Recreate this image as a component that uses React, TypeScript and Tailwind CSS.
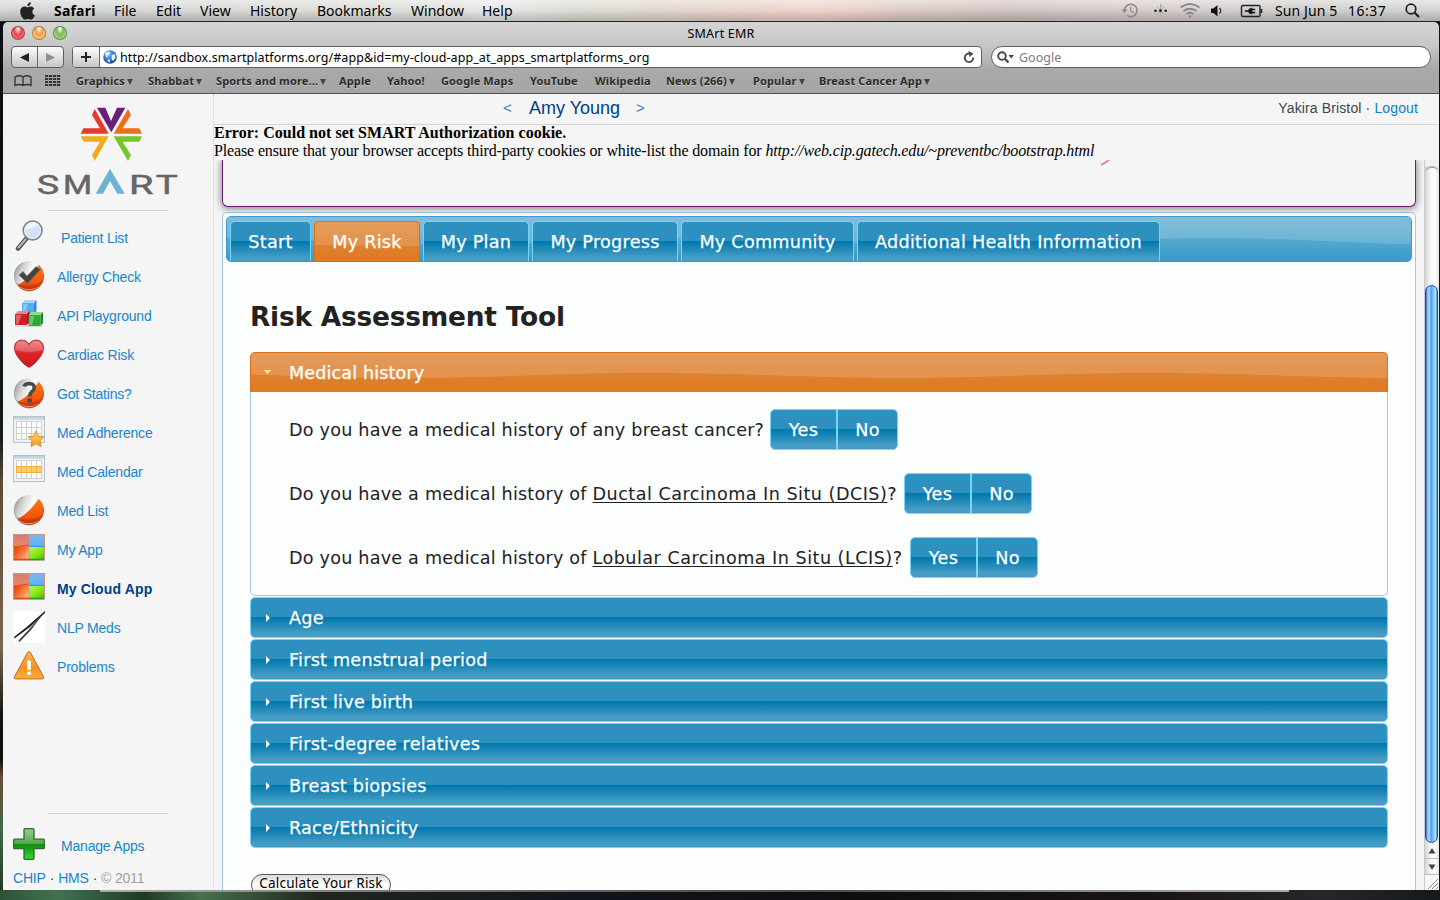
import React from "react";

const MENU: [string, string][] = [
  ["File", "w-[42px]"],
  ["Edit", "w-[44px]"],
  ["View", "w-[50px]"],
  ["History", "w-[67px]"],
  ["Bookmarks", "w-[94px]"],
  ["Window", "w-[71px]"],
  ["Help", "w-[40px]"],
];

const BOOKMARKS: [string, boolean, string][] = [
  ["Graphics", true, "w-[72px]"],
  ["Shabbat", true, "w-[68px]"],
  ["Sports and more...", true, "w-[123px]"],
  ["Apple", false, "w-[48px]"],
  ["Yahoo!", false, "w-[54px]"],
  ["Google Maps", false, "w-[89px]"],
  ["YouTube", false, "w-[65px]"],
  ["Wikipedia", false, "w-[71px]"],
  ["News (266)", true, "w-[87px]"],
  ["Popular", true, "w-[66px]"],
  ["Breast Cancer App", true, "w-[130px]"],
];

function Defs() {
  return (
    <svg className="absolute h-0 w-0" aria-hidden="true">
      <defs>
        <linearGradient id="silver" x1="0" y1=".2" x2=".75" y2=".5">
          <stop offset="0" stopColor="#8e8e8e" />
          <stop offset=".35" stopColor="#cfcfcf" />
          <stop offset=".75" stopColor="#ffffff" />
          <stop offset="1" stopColor="#d8d8d8" />
        </linearGradient>
        <linearGradient id="ember" x1="0" y1="0" x2="0" y2="1">
          <stop offset="0" stopColor="#ff7a1a" />
          <stop offset=".6" stopColor="#f4570c" />
          <stop offset="1" stopColor="#b82a08" />
        </linearGradient>
        <linearGradient id="heart" x1="0" y1="0" x2="0" y2="1">
          <stop offset="0" stopColor="#ee6c70" />
          <stop offset=".5" stopColor="#d8232a" />
          <stop offset="1" stopColor="#d0161c" />
        </linearGradient>
        <linearGradient id="redtile" x1="0" y1="0" x2="0" y2="1">
          <stop offset="0" stopColor="#c2452f" />
          <stop offset="1" stopColor="#e2542c" />
        </linearGradient>
        <linearGradient id="redlow" x1="0" y1="0" x2="1" y2=".7">
          <stop offset="0" stopColor="#e03c0a" />
          <stop offset=".5" stopColor="#f26a2c" />
          <stop offset="1" stopColor="#ffb47a" />
        </linearGradient>
        <linearGradient id="bluetile" x1="0" y1="0" x2="0" y2="1">
          <stop offset="0" stopColor="#7cb6ee" />
          <stop offset=".85" stopColor="#5fb2fb" />
          <stop offset="1" stopColor="#1a86ee" />
        </linearGradient>
        <linearGradient id="greentile" x1="0" y1="0" x2="1" y2="1">
          <stop offset="0" stopColor="#b4f65a" />
          <stop offset=".6" stopColor="#7ee60e" />
          <stop offset="1" stopColor="#4cb810" />
        </linearGradient>
        <linearGradient id="warn" x1="0" y1="0" x2="0" y2="1">
          <stop offset="0" stopColor="#f5b45a" />
          <stop offset=".6" stopColor="#f39320" />
          <stop offset="1" stopColor="#fcb040" />
        </linearGradient>
        <linearGradient id="plus" x1="0" y1="0" x2="0" y2="1">
          <stop offset="0" stopColor="#8fd08c" />
          <stop offset=".48" stopColor="#5aa856" />
          <stop offset=".52" stopColor="#118a10" />
          <stop offset="1" stopColor="#2fe02a" />
        </linearGradient>
        <linearGradient id="star" x1="0" y1="0" x2="0" y2="1">
          <stop offset="0" stopColor="#ffd977" />
          <stop offset="1" stopColor="#f59a12" />
        </linearGradient>
        <radialGradient id="globe" cx=".4" cy=".3" r=".75">
          <stop offset="0" stopColor="#7fc0f2" />
          <stop offset=".6" stopColor="#2a6fc4" />
          <stop offset="1" stopColor="#123d86" />
        </radialGradient>
        <clipPath id="ball">
          <circle cx="16" cy="16" r="14.7" />
        </clipPath>
      </defs>
    </svg>
  );
}

function Ball({ children }: { children?: React.ReactNode }) {
  return (
    <>
      <g clipPath="url(#ball)">
        <rect width="32" height="32" fill="url(#silver)" />
        <path d="M5 25 Q16 19 26.500 4 L34 6 V34 H4Z" fill="url(#ember)" />
        <path d="M1 21 Q14 31 31 20 V34 H1Z" fill="#8e1a04" opacity=".25" />
        <path d="M6 27 Q16 32.500 26 27" stroke="#ff9a7a" strokeWidth="1" fill="none" />
      </g>
      <path d="M8 28.300 A14.500 14.500 0 0 0 30.400 14" fill="none" stroke="#9c2a0c" strokeOpacity=".6" strokeWidth=".9" />
      <path d="M8 28.300 A14.500 14.500 0 0 1 10 2.800" fill="none" stroke="#777" strokeOpacity=".5" strokeWidth=".9" />
      {children}
    </>
  );
}

function Cube({ x, y, a, b, c }: { x: number; y: number; a: string; b: string; c: string }) {
  return (
    <g transform={"translate(" + x + " " + y + ")"}>
      <path d="M0 3 L3 0 H14.5 L12 3Z" fill={c} />
      <path d="M12 3 L14.5 0 V11 L12 14Z" fill={b} />
      <rect x="0" y="3" width="12" height="11" rx="1" fill={a} />
      <path d="M1 4 H6 L3.5 13 H1Z" fill="#fff" opacity=".3" />
    </g>
  );
}

function CalendarGrid() {
  return (
    <>
      <rect x="0.5" y="0.5" width="31" height="26" fill="#eef3f6" stroke="#b3c2cb" />
      <rect x="1" y="1" width="30" height="2.6" fill="#c3d2db" />
      <rect x="3" y="5" width="26" height="19" fill="#d0d0d0" />
      {[0, 1, 2].map((r) =>
        [0, 1, 2, 3, 4].map((c) => (
          <rect key={r + "-" + c} x={4 + c * 5} y={6 + r * 6} width="4" height="5" fill="#fff" />
        ))
      )}
    </>
  );
}

function Tiles() {
  return (
    <>
      <rect x="0" y="1" width="32" height="26.500" fill="#9a4a30" opacity=".55" />
      <rect x="1" y="2" width="14.500" height="12" fill="url(#redtile)" />
      <rect x="1" y="13" width="14.500" height="13" fill="url(#redlow)" />
      <path d="M1 2H15.500V11.500Q8 12 1 13.500Z" fill="#fff" opacity=".3" />
      <rect x="16.500" y="2" width="14.500" height="12" fill="url(#bluetile)" />
      <rect x="16.500" y="14" width="14.500" height="12" fill="url(#greentile)" />
      <rect x="1" y="25.700" width="15" height="1.600" fill="#d84a18" />
      <rect x="16" y="25.700" width="15" height="1.600" fill="#2d9a22" />
    </>
  );
}

const ICONS: Record<string, React.ReactNode> = {
  search: (
    <>
      <path d="M5 28.500 L13 19" stroke="#555" strokeWidth="4.600" strokeLinecap="round" />
      <path d="M5.300 27.600 L12.500 19.500" stroke="#b9b9b9" strokeWidth="2" strokeLinecap="round" />
      <circle cx="19.600" cy="10.500" r="9.300" fill="#d7e8fa" stroke="#858585" strokeWidth="1.800" />
      <circle cx="19.600" cy="10.500" r="8" fill="#cfe2f8" stroke="#eef3f8" strokeWidth="1" />
      <path d="M12 10 Q19 9 26 4.500 Q22 1.500 17 3 Q12 5 12 10Z" fill="#eef6ff" />
    </>
  ),
  check: (
    <Ball>
      <path d="M6 15 L10 11.500 L14 16 L23 6.500 L27.500 9.500 L14.500 23.500Z" fill="#444" stroke="#777" strokeWidth=".5" />
    </Ball>
  ),
  cubes: (
    <>
      <Cube x={9} y={1} a="#58a9ee" b="#3c86d2" c="#a8d5fa" />
      <Cube x={2} y={12} a="#cf2027" b="#98151b" c="#f08488" />
      <Cube x={15.5} y={13} a="#2fa834" b="#1d8124" c="#8fdd8c" />
      <rect x="2" y="26.500" width="28" height="1.500" fill="#888" opacity=".3" />
    </>
  ),
  heart: (
    <>
      <path d="M16 29.500 Q11 27 6 20.500 C-1 12 .5 3 8 2 Q13 1.500 16 6 Q19 1.500 24 2 C31.500 3 33 12 26 20.500 Q21 27 16 29.500Z" fill="url(#heart)" stroke="#a81c22" strokeWidth=".8" />
      <path d="M2.200 12 Q2 4 8.500 3.200 Q13 3 16 8 Q19 3 23.500 3.200 Q30 4 29.800 12 Q16 16 2.200 12Z" fill="#fff" opacity=".22" />
    </>
  ),
  question: (
    <Ball>
      <path d="M11 9.500 Q12 6.500 16.500 6.500 Q21.500 6.800 21.200 11 Q21 13.500 18.500 15 Q16.800 16.200 16.800 19.500" stroke="#4b4b4b" strokeWidth="3.600" fill="none" />
      <rect x="14.500" y="21.500" width="4.400" height="4" fill="#4b4b4b" />
    </Ball>
  ),
  adherence: (
    <>
      <CalendarGrid />
      <path d="M23 15 L25.400 20.100 L31 20.800 L27 24.700 L28 30.500 L23 27.700 L18 30.500 L19 24.700 L15 20.800 L20.600 20.100Z" fill="url(#star)" stroke="#d8891a" strokeWidth=".9" />
    </>
  ),
  calendar: (
    <>
      <CalendarGrid />
      <rect x="3" y="11" width="26" height="7" fill="#f5ad3a" />
      {[0, 1, 2, 3, 4].map((c) => (
        <rect key={c} x={4 + c * 5} y="12" width="4.200" height="5" fill="#ffd06a" />
      ))}
    </>
  ),
  ball: <Ball />,
  tiles: <Tiles />,
  needles: (
    <>
      <rect width="32" height="32" fill="#fff" />
      <path d="M32 0 V2 L17 16 L1.500 27.500 L1 26 L13 16.500Z" fill="#1d2126" />
      <path d="M31.500 1 L18 19 L7 30.500 L5.500 31 L6 29 L15 19.500Z" fill="#3a4148" />
    </>
  ),
  warning: (
    <>
      <path d="M16 1.800 Q17.300 1.800 18 3.500 L30.600 27 Q31.200 28.700 29.500 28.900 H2.500 Q.8 28.700 1.400 27 L14 3.500 Q14.700 1.800 16 1.800Z" fill="url(#warn)" stroke="#c46a10" strokeWidth="1" />
      <rect x="14.200" y="10.500" width="3.700" height="9.500" rx=".8" fill="#fff" />
      <rect x="14.200" y="21.500" width="3.700" height="3.600" rx="1" fill="#fff" />
    </>
  ),
  plus: (
    <path d="M12 .7 H20 Q21 .7 21 1.700 V11.200 H30.500 Q31.300 11.200 31.300 12.200 V19.700 Q31.300 20.700 30.500 20.700 H21 V30.500 Q21 31.300 20 31.300 H12 Q11 31.300 11 30.500 V20.700 H1.500 Q.7 20.700 .7 19.700 V12.200 Q.7 11.200 1.500 11.200 H11 V1.700 Q11 .7 12 .7Z" fill="url(#plus)" stroke="#2f6a2c" strokeWidth="1.300" />
  ),
};

const APPS: [string, string][] = [
  ["Allergy Check", "check"],
  ["API Playground", "cubes"],
  ["Cardiac Risk", "heart"],
  ["Got Statins?", "question"],
  ["Med Adherence", "adherence"],
  ["Med Calendar", "calendar"],
  ["Med List", "ball"],
  ["My App", "tiles"],
  ["My Cloud App", "tiles"],
  ["NLP Meds", "needles"],
  ["Problems", "warning"],
];

function AppIcon({ name, lift = "mb-[3px]" }: { name: string; lift?: string }) {
  return (
    <svg className={"h-8 w-8 shrink-0 " + lift} viewBox="0 0 32 32">
      {ICONS[name]}
    </svg>
  );
}

function MenuBar() {
  return (
    <div className="flex h-[22px] shrink-0 items-center border-b border-[#222] bg-[linear-gradient(to_right,#cdd1cf_0%,#d6d6d2_18%,#d9ddd6_30%,#e4e4e4_34%,#d8d8cf_40%,#e3cfc5_50%,#efcdc3_57%,#d8c5bd_63%,#cbbdb9_70%,#d3c8c6_80%,#c9c7c6_90%,#cfd0ce_100%)] font-['Noto_Sans','Open_Sans',sans-serif] text-[14px] text-black">
      <div className="flex h-full w-full items-center bg-gradient-to-b from-white/50 via-white/10 to-black/15">
        <svg className="ml-[20px] mr-[19px] h-[18px] w-[15px]" viewBox="0 0 15 18">
          <path d="M10.800 0 Q11 3.600 7.400 4.400 Q7.200 1 10.800 0Z M7.500 5.400 Q9 4.500 10.700 4.500 Q13 4.600 14.200 6.500 Q12.300 7.600 12.300 10 Q12.400 12.600 14.900 13.600 Q13.200 17.600 11 17.700 Q9.500 17 7.800 17 Q6.500 17 5.200 17.700 Q3.500 17.800 1.800 15 Q0 12 .2 9 Q.6 5.400 4 4.600 Q6 4.500 7.500 5.400Z" fill="#222" />
        </svg>
        <span className="w-[60px] font-bold tracking-[0.200px]">Safari</span>
        {MENU.map(([t, w]) => (
          <span key={t} className={w}>{t}</span>
        ))}
        <div className="flex-1" />
        <svg className="h-[18px] w-[150px]" viewBox="1116 2 150 18">
          <g stroke="#8a8a8a" fill="none" strokeWidth="1.500">
            <path d="M1124.500 11 A6.300 6.300 0 1 1 1127 15.500" />
            <path d="M1130.700 6.500 V11 L1134 12.500" strokeWidth="1.200" />
            <path d="M1157 7 L1163.500 14 L1160.500 17 V4.500 L1163.500 7.500 L1157 14.500" strokeWidth="1" stroke="#aaa" />
          </g>
          <path d="M1121.500 9.500 H1127.500 L1124.500 13Z" fill="#8a8a8a" />
          <g fill="#222">
            <circle cx="1155.500" cy="10.700" r="1.300" />
            <circle cx="1160.500" cy="10.700" r="1.400" />
            <circle cx="1165.700" cy="10.700" r="1.300" />
          </g>
          <g stroke="#888" fill="none" strokeWidth="1.800">
            <path d="M1180.500 7.500 Q1190 .5 1199.500 7.500" />
            <path d="M1183.500 11 Q1190 6.500 1196.500 11" />
            <path d="M1186.500 14 Q1190 11.500 1193.500 14" />
          </g>
          <circle cx="1190" cy="16.500" r="1.300" fill="#888" />
          <path d="M1211 8.500 H1213.500 L1217.500 5 V16.500 L1213.500 13 H1211Z" fill="#111" />
          <path d="M1219.500 8 Q1222 10.800 1219.500 13.500" stroke="#333" strokeWidth="1.300" fill="none" />
          <path d="M1243 5.500 H1259 Q1260 5.500 1260 6.500 V15.500 Q1260 16.500 1259 16.500 H1243 Q1241.500 16.500 1241.500 15 V7 Q1241.500 5.500 1243 5.500Z" fill="none" stroke="#222" strokeWidth="1.400" />
          <rect x="1260.500" y="9" width="1.800" height="4" fill="#222" />
          <path d="M1245 10.500 H1248 Q1249 8 1252 8 V9 H1255 V10 H1252 V12 H1255 V13 H1252 V14 Q1249 14 1248 11.500 H1245Z" fill="#111" stroke="#111" strokeWidth=".5" />
        </svg>
        <span className="ml-[9px] w-[73px] whitespace-nowrap tracking-[0.100px]">Sun Jun 5</span>
        <span className="w-[57px] tracking-[0.500px]">16:37</span>
        <svg className="mr-[20px] h-[15px] w-[15px]" viewBox="0 0 15 15">
          <circle cx="6" cy="6" r="4.800" fill="none" stroke="#222" strokeWidth="1.700" />
          <path d="M9.500 9.500 L14 14" stroke="#222" strokeWidth="2.300" />
        </svg>
      </div>
    </div>
  );
}

function Chrome() {
  return (
    <div className="flex h-[72px] shrink-0 flex-col rounded-t-[5px] border-b border-[#515151] bg-[linear-gradient(to_bottom,#d6d6d6_0,#c6c6c6_24px,#a9a9a9_48px,#a5a5a5_100%)] font-['Noto_Sans','Open_Sans',sans-serif]">
      <div className="flex h-[24px] items-center">
        <div className="flex w-[120px] gap-[7px] pb-[2px] pl-[8px]">
          <span className="h-[14px] w-[14px] rounded-full border border-[#8c3a3a]/80 bg-[radial-gradient(ellipse_at_50%_15%,#fbd0d0_8%,#e2454c_45%,#f79a9a_100%)]" />
          <span className="h-[14px] w-[14px] rounded-full border border-[#a26a35]/80 bg-[radial-gradient(ellipse_at_50%_15%,#fdeed8_8%,#ee9a4a_40%,#ffe28a_90%)]" />
          <span className="h-[14px] w-[14px] rounded-full border border-[#4c7a3a]/80 bg-[radial-gradient(ellipse_at_50%_15%,#e4f6dc_8%,#7ab85c_40%,#c4ee9c_100%)]" />
        </div>
        <span className="flex-1 pr-[120px] text-center text-[12.500px] tracking-[0.200px] text-black">SMArt EMR</span>
      </div>
      <div className="flex h-[22px] w-full pl-[8px] pr-[8px]">
        <div className="flex h-[22px] w-[53px] rounded-[4px] border border-[#5f5f5f] bg-gradient-to-b from-[#fdfdfd] to-[#c6c6c6]">
          <span className="flex w-[26px] items-center justify-center border-r border-[#6a6a6a]">
            <svg className="h-[9px] w-[9px]" viewBox="0 0 9 9"><path d="M9 0V9L0 4.500Z" fill="#222" /></svg>
          </span>
          <span className="flex flex-1 items-center justify-center">
            <svg className="h-[9px] w-[9px]" viewBox="0 0 9 9"><path d="M0 0V9L9 4.500Z" fill="#909090" /></svg>
          </span>
        </div>
        <div className="ml-[8px] flex h-[22px] w-[910px] overflow-hidden rounded-[4px] border border-[#5f5f5f] bg-white">
          <span className="flex w-[27px] items-center justify-center border-r border-[#6a6a6a] bg-gradient-to-b from-[#fdfdfd] to-[#c6c6c6]">
            <svg className="h-[10px] w-[10px]" viewBox="0 0 10 10"><path d="M4 0H6V4H10V6H6V10H4V6H0V4H4Z" fill="#222" /></svg>
          </span>
          <svg className="ml-[3px] mt-[3px] h-[14px] w-[14px]" viewBox="0 0 14 14">
            <circle cx="7" cy="7" r="6.800" fill="url(#globe)" />
            <path d="M2 3 Q5 1 7 2 L6 5 L4 6 L5 8 L3 7Z M9 5 L12 4 L12.500 8 L10 11 L8.500 9Z M5 9 L7 10 L6.500 13 L4.500 11Z" fill="#e2f0fa" />
          </svg>
          <span className="ml-[3px] flex-1 whitespace-nowrap text-[12.500px] leading-[21px] tracking-[0.085px] text-black">http://sandbox.smartplatforms.org/#app&amp;id=my-cloud-app_at_apps_smartplatforms_org</span>
          <svg className="mr-[6px] mt-[4px] h-[12px] w-[12px]" viewBox="0 0 12 12">
            <path d="M10.300 6.500 A4.300 4.300 0 1 1 6 2.500" fill="none" stroke="#444" strokeWidth="1.800" />
            <path d="M5.500 0 L10.500 2.800 L6.500 6Z" fill="#444" />
          </svg>
        </div>
        <div className="ml-[9px] flex h-[22px] flex-1 items-center rounded-full border border-[#5f5f5f] bg-white pl-[5px]">
          <svg className="h-[12px] w-[18px]" viewBox="0 0 18 12">
            <circle cx="5" cy="5" r="3.800" fill="none" stroke="#444" strokeWidth="1.900" />
            <path d="M7.800 7.800 L11.500 11.500" stroke="#444" strokeWidth="2.200" />
            <path d="M11.500 4 H17 L14.200 7.500Z" fill="#444" />
          </svg>
          <span className="ml-[4px] pt-[2px] text-[12.500px] leading-[20px] text-[#7b7b7b]">Google</span>
        </div>
      </div>
      <div className="flex h-[25px] items-center pt-[2px] text-[11px] font-bold text-[#2c2c2c] [text-shadow:0_1px_0_#c4c4c4]">
        <svg className="mb-[2px] ml-[11px] h-[12px] w-[18px]" viewBox="0 0 18 12">
          <path d="M1 10.500 V2 Q5 -.5 9 2 Q13 -.5 17 2 V10.500 Q13 8.500 9 10.500 Q5 8.500 1 10.500Z M9 2 V10.500" fill="none" stroke="#333" strokeWidth="1.300" />
        </svg>
        <svg className="mb-[2px] ml-[13px] mr-[15px] h-[12px] w-[16px]" viewBox="0 0 16 12">
          {[0, 1, 2, 3].map((r) =>
            [0, 1, 2, 3].map((c) => <rect key={r + "-" + c} x={c * 4} y={r * 3} width="3.200" height="2" fill="#333" />)
          )}
        </svg>
        {BOOKMARKS.map(([t, arrow, w]) => (
          <span key={t} className={"flex shrink-0 items-center whitespace-nowrap tracking-[0.140px] " + w}>
            {t}
            {arrow && (
              <svg className="ml-[2px] h-[6px] w-[6px]" viewBox="0 0 6 6"><path d="M0 0H6L3 6Z" fill="#444" /></svg>
            )}
          </span>
        ))}
      </div>
    </div>
  );
}

function Logo() {
  return (
    <svg className="ml-[33px] h-[88px] w-[142px] overflow-visible" viewBox="111 52 426 264">
      <path d="M294 54H319L336 94L354 54H379L337 128Z" fill="#6b1f7c" />
      <path d="M287 58L329 132H245L253 116H303L279 76Z" fill="#e53a2e" />
      <path d="M387 58L344 132H429L421 116H371L396 76Z" fill="#ec6f1c" />
      <path d="M245 140H329L287 214L279 196L303 156H254Z" fill="#f0ab1c" />
      <path d="M429 140H344L387 214L396 196L371 156H421Z" fill="#76c52c" />
      <path d="M333 237L377 312H355L333 274L312 312H290Z" fill="#6bb2d6" />
      <g fill="#666" stroke="#666" strokeWidth="1.500" fontFamily="Roboto, sans-serif" fontSize="80">
        <text x="113" y="312" textLength="67" lengthAdjust="spacingAndGlyphs">S</text>
        <text x="192" y="312" textLength="87" lengthAdjust="spacingAndGlyphs">M</text>
        <text x="390" y="312" textLength="73" lengthAdjust="spacingAndGlyphs">R</text>
        <text x="470" y="312" textLength="66" lengthAdjust="spacingAndGlyphs">T</text>
      </g>
    </svg>
  );
}

function Sidebar() {
  return (
    <aside className="flex w-[211px] shrink-0 flex-col border-r border-dotted border-[#cfcfcf] pt-[13px] font-['Liberation_Sans',Arial,sans-serif] text-[14px] tracking-[-0.200px] text-[#1a86cb]">
      <Logo />
      <div className="ml-[45px] mt-[15px] h-px w-[120px] bg-[#d4d4d4]" />
      <div className="mt-[8px] flex h-[39px] items-center pl-[10px]">
        <AppIcon name="search" lift="mb-[5px]" />
        <span className="ml-[16px]">Patient List</span>
      </div>
      {APPS.map(([t, icon]) => (
        <div key={t} className="flex h-[39px] items-center pl-[10px]">
          <AppIcon name={icon} />
          <span className={t === "My Cloud App" ? "ml-[12px] font-bold tracking-[0.150px] text-[#003f87]" : "ml-[12px]"}>{t}</span>
        </div>
      ))}
      <div className="flex-1" />
      <div className="ml-[45px] h-px w-[120px] bg-[#d4d4d4]" />
      <div className="mt-[13px] flex h-[39px] items-center pl-[10px]">
        <AppIcon name="plus" lift="mb-[5px]" />
        <span className="ml-[16px]">Manage Apps</span>
      </div>
      <div className="flex h-[24px] items-center gap-[4px] pl-[10px] tracking-[-0.200px]">
        <span>CHIP</span>
        <span className="text-[#444]">·</span>
        <span>HMS</span>
        <span className="text-[#444]">·</span>
        <span className="text-[#a0a0a0]">© 2011</span>
      </div>
    </aside>
  );
}

function Wave({ high, low, start }: { high: number; low: number; start: number }) {
  let d = "M" + start + " -2 V" + high;
  for (let i = 0, x = start; i < 7; i++, x += 250) {
    const from = i % 2 === 0 ? high : low;
    const to = i % 2 === 0 ? low : high;
    d += " C" + (x + 95) + " " + from + " " + (x + 155) + " " + to + " " + (x + 250) + " " + to;
  }
  d += " V-2Z";
  return (
    <svg className="absolute inset-0 h-full w-full" aria-hidden="true">
      <path d={d} fill="#fff" fillOpacity=".15" />
    </svg>
  );
}

const TABS: [string, string][] = [
  ["Start", "w-[81px]"],
  ["My Risk", "w-[106px]"],
  ["My Plan", "w-[106px]"],
  ["My Progress", "w-[146px]"],
  ["My Community", "w-[173px]"],
  ["Additional Health Information", "w-[303px]"],
];

function Tabs() {
  return (
    <div className="relative mx-[3px] mt-[3px] flex h-[46px] shrink-0 gap-[3px] overflow-hidden rounded-[5px] border border-[#4297d7] bg-gradient-to-b from-[#6db3d3] from-0% via-[#55a9cf] via-50% to-[#379bca] pl-[3px] pt-[4px] tracking-[0.270px] [-webkit-text-stroke:0.250px_white]">
      <Wave high={21} low={28} start={-16} />
      {TABS.map(([t, w]) =>
        t === "My Risk" ? (
          <div key={t} className={"relative flex items-center justify-center overflow-hidden whitespace-nowrap rounded-t-[5px] border border-b-0 border-[#d9701a] bg-gradient-to-b from-[#e08a3c] to-[#de7a22] pt-[2px] text-white " + w}>
            <Wave high={20} low={24} start={-150} />
            <span className="relative">{t}</span>
          </div>
        ) : (
          <div key={t} className={"relative flex items-center justify-center whitespace-nowrap rounded-t-[5px] border border-b-0 border-[#77d5f7] bg-[linear-gradient(to_bottom,#2e90bf_0,#2e90bf_49%,#0078ae_50%,#459cc4_90%)] pt-[2px] text-white " + w}>
            {t}
          </div>
        )
      )}
    </div>
  );
}

function YesNo() {
  return (
    <div className="ml-[6px] flex h-[41px] tracking-[0.300px] text-white [-webkit-text-stroke:0.250px_white]">
      <span className="flex w-[67px] items-center justify-center rounded-l-[5px] border border-[#77d5f7] bg-[linear-gradient(to_bottom,#2e90bf_0,#2e90bf_49%,#0078ae_50%,#459cc4_90%)] pt-[2px]">Yes</span>
      <span className="flex w-[61px] items-center justify-center rounded-r-[5px] border border-[#77d5f7] bg-[linear-gradient(to_bottom,#2e90bf_0,#2e90bf_49%,#0078ae_50%,#459cc4_90%)] pt-[2px]">No</span>
    </div>
  );
}

const SECTIONS = ["Age", "First menstrual period", "First live birth", "First-degree relatives", "Breast biopsies", "Race/Ethnicity"];

function AppFrame() {
  return (
    <div className="flex min-w-0 flex-1 flex-col overflow-hidden px-[8px] font-['DejaVu_Sans',Verdana,sans-serif] text-[17.600px] text-[#222]">
      <div className="relative h-[47px] shrink-0 rounded-b-[6px] border border-t-0 border-[#701c78] bg-[#f5f5f5] shadow-[0_1px_7px_1px_#888]">
        <svg className="absolute left-[877px] top-0 h-[6px] w-[11px]" viewBox="0 0 11 6"><path d="M1 5 Q5 3 9 0" fill="none" stroke="#f2778f" strokeWidth="1.800" /></svg>
      </div>
      <div className="mt-[5px] flex flex-1 flex-col rounded-t-[5px] border border-b-0 border-[#a6c9e2] bg-[#fcfdfd]">
        <Tabs />
        <h1 className="ml-[27px] mt-[35px] h-[40px] shrink-0 whitespace-nowrap text-[26.400px] font-bold leading-[40px] tracking-[-0.200px]">Risk Assessment Tool</h1>
        <div className="ml-[27px] mr-[27px] mt-[15px] flex shrink-0 flex-col">
          <div className="relative flex h-[40px] items-center overflow-hidden rounded-t-[5px] border border-b-0 border-[#d9701a] bg-gradient-to-b from-[#e0893a] to-[#de7a22] pl-[12px] text-white">
            <Wave high={20} low={25} start={-100} />
            <svg className="relative h-[5px] w-[9px]" viewBox="0 0 9 5"><path d="M.5 0H8.500L4.500 4Z" fill="#f9e47d" /></svg>
            <span className="relative ml-[17px] pt-[2px] tracking-[0.120px] [-webkit-text-stroke:0.250px_white]">Medical history</span>
          </div>
          <div className="flex h-[204px] flex-col gap-[23px] rounded-b-[5px] border border-t-0 border-[#a6c9e2] pl-[38px] pt-[17px] tracking-[0.210px]">
            <div className="flex items-center">
              <span className="w-[475px] whitespace-nowrap pt-[2px]">Do you have a medical history of any breast cancer?</span>
              <YesNo />
            </div>
            <div className="flex items-center">
              <span className="w-[609px] whitespace-nowrap pt-[2px]">Do you have a medical history of <u className="tracking-[0.480px] underline-offset-2">Ductal Carcinoma In Situ (DCIS)</u>?</span>
              <YesNo />
            </div>
            <div className="flex items-center">
              <span className="w-[615px] whitespace-nowrap pt-[2px]">Do you have a medical history of <u className="tracking-[0.480px] underline-offset-2">Lobular Carcinoma In Situ (LCIS)</u>?</span>
              <YesNo />
            </div>
          </div>
          {SECTIONS.map((s) => (
            <div key={s} className="mt-px flex h-[41px] items-center rounded-[5px] border border-[#77d5f7] bg-[linear-gradient(to_bottom,#2e90bf_0,#2e90bf_49%,#0078ae_50%,#459cc4_90%)] pl-[15px] text-white">
              <svg className="h-[8px] w-[4px]" viewBox="0 0 4 8"><path d="M0 0V8L4 4Z" fill="#fff" /></svg>
              <span className="ml-[19px] pt-[2px] tracking-[0.230px] [-webkit-text-stroke:0.250px_white]">{s}</span>
            </div>
          ))}
        </div>
        <div className="ml-[28px] mt-[26px] flex h-[22px] w-[140px] shrink-0 items-center justify-center whitespace-nowrap rounded-full border border-[#555] bg-gradient-to-b from-[#d9d9d9] via-white to-[#e2e2e2] pb-[2px] font-['Noto_Sans','Open_Sans',sans-serif] text-[13.500px] leading-none tracking-[0.200px] text-black">
          Calculate Your Risk
        </div>
      </div>
    </div>
  );
}

function Scrollbar() {
  return (
    <div className="flex w-[15px] shrink-0 flex-col border-l border-[#c9c9c9] bg-[linear-gradient(to_right,#d2d2d2,#f6f6f6_40%,#fff_70%,#e4e4e4)]">
      <div className="h-[6px] w-full bg-[#f0f0f0]" />
      <div className="h-[10px] w-full rounded-t-full border-t-2 border-[#a8a8a8]" />
      <div className="mt-[109px] h-[558px] w-[13px] rounded-full border border-[#1c4fb0] bg-[linear-gradient(to_right,#1a5fd0_0%,#9cc8f6_15%,#a5cdf7_35%,#4b9bea_45%,#7cc4fb_65%,#a6e8ff_90%,#3c7ccc_100%)]" />
      <svg className="h-[32px] w-[14px]" viewBox="0 0 14 32">
        <path d="M3.500 10.500 L7 5 L10.500 10.500Z M3.500 21.500 H10.500 L7 27Z" fill="#444" />
        <path d="M0 15.500H14 M0 31.500H14" stroke="#bbb" />
      </svg>
      <svg className="h-[15px] w-[14px] bg-[#f7f7f7]" viewBox="0 0 14 15">
        <path d="M3 14 L13 4 M7 14 L13 8 M11 14 L13 12" stroke="#8a8a8a" />
      </svg>
    </div>
  );
}

export default function App() {
  return (
    <div className="flex h-[900px] w-[1440px] flex-col overflow-hidden bg-[#111]">
      <Defs />
      <MenuBar />
      <div className="flex h-[868px] shrink-0 bg-[linear-gradient(to_bottom,#0a0f12_0%,#141c1e_48%,#5d4b36_53%,#79664f_72%,#14120e_80%,#0d140e_85%,#6b4a38_87%,#3f6a48_93%,#233826_100%)] pl-[3px]">
        <div className="flex w-[1436px] flex-col">
          <Chrome />
          <div className="flex min-h-0 flex-1 bg-[#f5f5f5]">
            <Sidebar />
            <main className="flex min-w-0 flex-1 flex-col">
              <header className="flex h-[31px] shrink-0 items-center border-b border-[#d6d6d6] pb-[1px] font-['Liberation_Sans',Arial,sans-serif]">
                <div className="flex w-[500px] items-center pl-[289px] text-[#1a86cb]">
                  <span className="w-[26px] text-[15px]">&lt;</span>
                  <span className="w-[107px] whitespace-nowrap text-[18px] text-[#003f87]">Amy Young</span>
                  <span className="text-[15px]">&gt;</span>
                </div>
                <div className="flex-1 pr-[21px] text-right text-[14px] tracking-[0.130px] text-[#444]">
                  Yakira Bristol · <span className="text-[#0b7fc9]">Logout</span>
                </div>
              </header>
              <div className="h-[35px] shrink-0 whitespace-nowrap font-['Liberation_Serif','Times_New_Roman',serif] text-[16px] leading-[18px] text-black">
                <div className="h-[17px] font-bold leading-[16px] tracking-[0.020px]">Error: Could not set SMART Authorization cookie.</div>
                <div className="tracking-[-0.140px]">Please ensure that your browser accepts third-party cookies or white-list the domain for <i>http://web.cip.gatech.edu/~preventbc/bootstrap.html</i></div>
              </div>
              <div className="flex min-h-0 flex-1">
                <AppFrame />
                <Scrollbar />
              </div>
            </main>
          </div>
        </div>
        <div className="flex-1 bg-[#101214]" />
      </div>
      <div className="flex h-[10px] shrink-0 bg-[linear-gradient(to_right,#2e5236_0%,#3f7350_4%,#1e3a24_10%,#47704b_14%,#20261e_22%,#11141c_40%,#0d0e10_60%,#1a1315_80%,#26262a_92%,#15191b_100%)]">
        <div className="ml-[100px] h-[2px] w-[1189px] bg-[linear-gradient(to_right,#a9a9a9_0%,#6a6a6a_30%,#4a4a4a_60%,#999_90%,#aaa_100%)]" />
      </div>
    </div>
  );
}
